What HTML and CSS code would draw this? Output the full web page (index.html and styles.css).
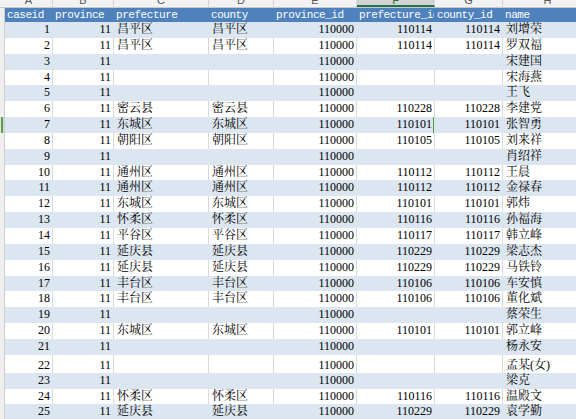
FILE: index.html
```html
<!DOCTYPE html>
<html lang="zh">
<head>
<meta charset="utf-8">
<title>sheet</title>
<link rel="stylesheet" href="styles.css">
</head>
<body>
<div class="sheet">
  <div class="colbar">
    <div class="corner"></div>
    <div class="cl"><span>A</span></div>
    <div class="cl"><span>B</span></div>
    <div class="cl"><span>C</span></div>
    <div class="cl"><span>D</span></div>
    <div class="cl"><span>E</span></div>
    <div class="cl sel"><span>F</span></div>
    <div class="cl"><span>G</span></div>
    <div class="cl"><span>H</span></div>
  </div>
  <div class="row head">
    <div class="rh"></div>
    <div class="c">caseid</div>
    <div class="c">province</div>
    <div class="c">prefecture</div>
    <div class="c">county</div>
    <div class="c">province_id</div>
    <div class="c">prefecture_id</div>
    <div class="c">county_id</div>
    <div class="c">name</div>
  </div>
  <div class="row band"><div class="rh"></div><div class="c r">1</div><div class="c r">11</div><div class="c">昌平区</div><div class="c">昌平区</div><div class="c r">110000</div><div class="c r">110114</div><div class="c r">110114</div><div class="c">刘增荣</div></div>
  <div class="row"><div class="rh"></div><div class="c r">2</div><div class="c r">11</div><div class="c">昌平区</div><div class="c">昌平区</div><div class="c r">110000</div><div class="c r">110114</div><div class="c r">110114</div><div class="c">罗双福</div></div>
  <div class="row band"><div class="rh"></div><div class="c r">3</div><div class="c r">11</div><div class="c"></div><div class="c"></div><div class="c r">110000</div><div class="c r"></div><div class="c r"></div><div class="c">宋建国</div></div>
  <div class="row"><div class="rh"></div><div class="c r">4</div><div class="c r">11</div><div class="c"></div><div class="c"></div><div class="c r">110000</div><div class="c r"></div><div class="c r"></div><div class="c">宋海燕</div></div>
  <div class="row band"><div class="rh"></div><div class="c r">5</div><div class="c r">11</div><div class="c"></div><div class="c"></div><div class="c r">110000</div><div class="c r"></div><div class="c r"></div><div class="c">王飞</div></div>
  <div class="row"><div class="rh"></div><div class="c r">6</div><div class="c r">11</div><div class="c">密云县</div><div class="c">密云县</div><div class="c r">110000</div><div class="c r">110228</div><div class="c r">110228</div><div class="c">李建党</div></div>
  <div class="row band"><div class="rh sel"></div><div class="c r">7</div><div class="c r">11</div><div class="c">东城区</div><div class="c">东城区</div><div class="c r">110000</div><div class="c r cur">110101</div><div class="c r">110101</div><div class="c">张智勇</div></div>
  <div class="row"><div class="rh"></div><div class="c r">8</div><div class="c r">11</div><div class="c">朝阳区</div><div class="c">朝阳区</div><div class="c r">110000</div><div class="c r">110105</div><div class="c r">110105</div><div class="c">刘来祥</div></div>
  <div class="row band"><div class="rh"></div><div class="c r">9</div><div class="c r">11</div><div class="c"></div><div class="c"></div><div class="c r">110000</div><div class="c r"></div><div class="c r"></div><div class="c">肖绍祥</div></div>
  <div class="row"><div class="rh"></div><div class="c r">10</div><div class="c r">11</div><div class="c">通州区</div><div class="c">通州区</div><div class="c r">110000</div><div class="c r">110112</div><div class="c r">110112</div><div class="c">王晨</div></div>
  <div class="row band"><div class="rh"></div><div class="c r">11</div><div class="c r">11</div><div class="c">通州区</div><div class="c">通州区</div><div class="c r">110000</div><div class="c r">110112</div><div class="c r">110112</div><div class="c">金禄春</div></div>
  <div class="row"><div class="rh"></div><div class="c r">12</div><div class="c r">11</div><div class="c">东城区</div><div class="c">东城区</div><div class="c r">110000</div><div class="c r">110101</div><div class="c r">110101</div><div class="c">郭炜</div></div>
  <div class="row band"><div class="rh"></div><div class="c r">13</div><div class="c r">11</div><div class="c">怀柔区</div><div class="c">怀柔区</div><div class="c r">110000</div><div class="c r">110116</div><div class="c r">110116</div><div class="c">孙福海</div></div>
  <div class="row"><div class="rh"></div><div class="c r">14</div><div class="c r">11</div><div class="c">平谷区</div><div class="c">平谷区</div><div class="c r">110000</div><div class="c r">110117</div><div class="c r">110117</div><div class="c">韩立峰</div></div>
  <div class="row band"><div class="rh"></div><div class="c r">15</div><div class="c r">11</div><div class="c">延庆县</div><div class="c">延庆县</div><div class="c r">110000</div><div class="c r">110229</div><div class="c r">110229</div><div class="c">梁志杰</div></div>
  <div class="row"><div class="rh"></div><div class="c r">16</div><div class="c r">11</div><div class="c">延庆县</div><div class="c">延庆县</div><div class="c r">110000</div><div class="c r">110229</div><div class="c r">110229</div><div class="c">马铁铃</div></div>
  <div class="row band"><div class="rh"></div><div class="c r">17</div><div class="c r">11</div><div class="c">丰台区</div><div class="c">丰台区</div><div class="c r">110000</div><div class="c r">110106</div><div class="c r">110106</div><div class="c">车安慎</div></div>
  <div class="row"><div class="rh"></div><div class="c r">18</div><div class="c r">11</div><div class="c">丰台区</div><div class="c">丰台区</div><div class="c r">110000</div><div class="c r">110106</div><div class="c r">110106</div><div class="c">董化斌</div></div>
  <div class="row band"><div class="rh"></div><div class="c r">19</div><div class="c r">11</div><div class="c"></div><div class="c"></div><div class="c r">110000</div><div class="c r"></div><div class="c r"></div><div class="c">蔡荣生</div></div>
  <div class="row"><div class="rh"></div><div class="c r">20</div><div class="c r">11</div><div class="c">东城区</div><div class="c">东城区</div><div class="c r">110000</div><div class="c r">110101</div><div class="c r">110101</div><div class="c">郭立峰</div></div>
  <div class="row band"><div class="rh"></div><div class="c r">21</div><div class="c r">11</div><div class="c"></div><div class="c"></div><div class="c r">110000</div><div class="c r"></div><div class="c r"></div><div class="c">杨永安</div></div>
  <div class="row tall"><div class="rh"></div><div class="c r">22</div><div class="c r">11</div><div class="c"></div><div class="c"></div><div class="c r">110000</div><div class="c r"></div><div class="c r"></div><div class="c">孟某(女)</div></div>
  <div class="row band"><div class="rh"></div><div class="c r">23</div><div class="c r">11</div><div class="c"></div><div class="c"></div><div class="c r">110000</div><div class="c r"></div><div class="c r"></div><div class="c">梁克</div></div>
  <div class="row"><div class="rh"></div><div class="c r">24</div><div class="c r">11</div><div class="c">怀柔区</div><div class="c">怀柔区</div><div class="c r">110000</div><div class="c r">110116</div><div class="c r">110116</div><div class="c">温殿文</div></div>
  <div class="row band"><div class="rh"></div><div class="c r">25</div><div class="c r">11</div><div class="c">延庆县</div><div class="c">延庆县</div><div class="c r">110000</div><div class="c r">110229</div><div class="c r">110229</div><div class="c">袁学勤</div></div>
</div>
</body>
</html>
```
FILE: styles.css
```css
html, body {
  margin: 0;
  padding: 0;
  overflow: hidden;
  background: #ffffff;
}

.sheet {
  width: 576px;
  height: 419px;
  overflow: hidden;
  font-family: "Liberation Serif", "Noto Serif CJK SC", "Noto Sans CJK SC", serif;
  font-size: 12px;
  color: #000000;
}

.colbar,
.row {
  display: grid;
  grid-template-columns: 5px 48px 61px 95px 65px 83px 78px 68px 90px;
}

.colbar {
  height: 8px;
  box-sizing: border-box;
  border-bottom: 1px solid #c9c9c9;
  background: #f2f2f2;
  overflow: hidden;
}

.corner {
  background: #f2f2f2;
}

.cl {
  box-sizing: border-box;
  border-right: 1px solid #d4d4d4;
  text-align: center;
  overflow: hidden;
  font-family: "Liberation Sans", sans-serif;
  font-size: 11px;
  color: #555555;
}

.cl span {
  display: block;
  line-height: 14px;
  margin-top: -7px;
}

.cl.sel {
  background: #d3d3d3;
  border-bottom: 2px solid #217346;
  color: #217346;
}

.row {
  height: 15.85px;
}

.row .c {
  box-sizing: border-box;
  padding: 0 2px 0 3px;
  line-height: 15.85px;
  border-right: 1px solid #d9d9d9;
  white-space: nowrap;
  overflow: hidden;
}

.row .r {
  text-align: right;
}

.rh {
  box-sizing: border-box;
  background: #efefef;
  border-right: 1px solid #cfcfcf;
}

.rh.sel {
  background: linear-gradient(to right, #e2e2e2 1px, #5aa04a 1px, #5aa04a 3px, #d6d6d6 3px);
}

.band .c {
  background: #dce6f1;
  border-right-color: #dce6f1;
}

.head {
  height: 14px;
}

.head .c {
  line-height: 14px;
  padding: 0 0 0 2px;
  background: #4f81bd;
  border-right-color: #4f81bd;
  color: #ffffff;
  font-family: "Liberation Mono", monospace;
  font-size: 11px;
  letter-spacing: -0.45px;
}

.tall {
  height: 18px;
}

.tall .c {
  line-height: 16px;
  padding-top: 2px;
}

.cur {
  position: relative;
  overflow: visible;
}

.cur::after {
  content: "";
  position: absolute;
  top: -1px;
  bottom: -1px;
  left: -1px;
  right: 0;
  border: 1.5px solid #4e9a3d;
}
```
